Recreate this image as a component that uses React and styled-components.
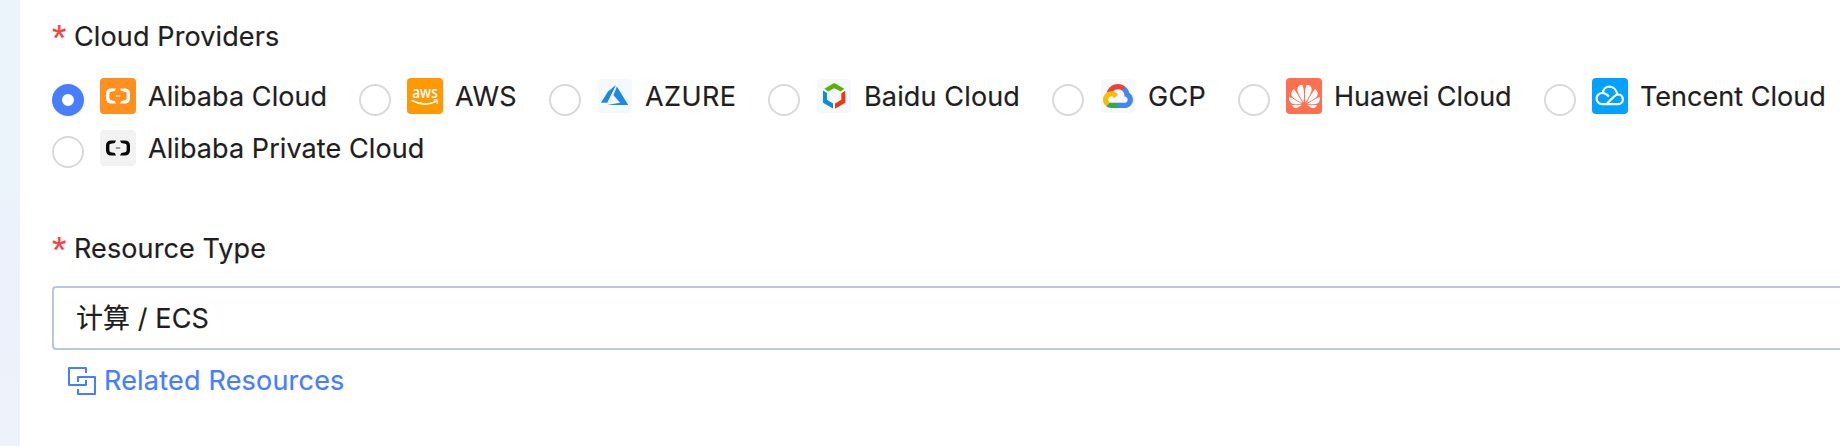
import React from "react";
import styled, { createGlobalStyle } from "styled-components";
import { SiHuawei } from "react-icons/si";

const GlobalStyle = createGlobalStyle`
  * { box-sizing: border-box; }
  body { margin: 0; background: #fff; overflow: hidden; }
`;

const Page = styled.div`
  display: flex;
  height: 446px;
  overflow: hidden;
  color: #1f1f1f;
  font-family: Inter, "Noto Sans CJK SC", sans-serif;
  font-size: 27px;
`;

const Rail = styled.div`
  flex: 0 0 20px;
  background: linear-gradient(#ebf3fb 0%, #ebf3fb 40%, #edf1fb 62%, #edf2fb 100%);
`;

const Form = styled.main`
  flex: 1 0 1860px;
  padding: 17px 0 0 32px;
`;

const Text = styled.span`
  white-space: nowrap;
  letter-spacing: ${(p) => p.$tracking ?? 0.08}px;
  -webkit-text-stroke: 0.2px currentColor;
`;

const FieldTitle = styled.div`
  display: flex;
  align-items: center;
  gap: 8px;
  height: 40px;
  line-height: 40px;
`;

const Required = styled.span`
  width: 14px;
  height: 40px;
  color: #f04545;
  font-family: "Liberation Sans", sans-serif;
  font-size: 37px;
  line-height: 44px;
  -webkit-text-stroke: 0.2px currentColor;
`;

const Options = styled.div`
  display: flex;
  flex-wrap: wrap;
  column-gap: 32px;
  width: 1788px;
  padding-top: 19px;
`;

const Option = styled.label`
  display: flex;
  align-items: flex-start;
  height: 52px;
`;

const Radio = styled.span`
  width: 32px;
  height: 32px;
  margin: 8px 16px 0 0;
  border-radius: 50%;
  background: #fff;
  border: ${(p) => (p.$checked ? "10px solid #477dff" : "2px solid #d9d9d9")};
`;

const Badge = styled.span`
  display: flex;
  width: 36px;
  height: 36px;
  margin: 2px 12px 0 0;
  border: ${(p) => (p.$inset ? "1px solid #fff" : "0")};
  border-radius: ${(p) => (p.$inset ? 5 : 4)}px;
  background: ${(p) => p.$bg};
  overflow: hidden;
  align-items: center;
  justify-content: center;

  svg { flex: none; }
`;

const OptionText = styled(Text)`
  width: ${(p) => p.$width}px;
  height: 42px;
  line-height: 42px;
`;

const ResourceField = styled.section`
  margin-top: 49px;
`;

const Select = styled.div`
  display: flex;
  align-items: center;
  height: 64px;
  margin-top: 17px;
  padding: 0 22px 3px;
  border: 2px solid #b8c6e3;
  border-radius: 4px;
`;

const RelatedLink = styled.a`
  display: inline-flex;
  align-items: center;
  gap: 8px;
  height: 40px;
  margin: 11px 0 0 16px;
  color: #477dff;
  line-height: 42px;
`;

const Alibaba = ({ color }) => (
  <svg width="36" height="36" viewBox="0 0 36 36" fill={color}>
    <path d="M16 10.4h-5a5 5 0 0 0-5 5v5.2a5 5 0 0 0 5 5h5l-1.2-2.5-3.9-.8c-.9-.2-1.5-.9-1.5-1.7v-5.2c0-.8.6-1.5 1.5-1.7l3.9-.8z" />
    <path d="M20 10.4h5a5 5 0 0 1 5 5v5.2a5 5 0 0 1-5 5h-5l1.2-2.5 3.9-.8c.9-.2 1.5-.9 1.5-1.7v-5.2c0-.8-.6-1.5-1.5-1.7l-3.9-.8z" />
    <path d="M15.8 17.3h4.4v1.4h-4.4z" opacity=".5" />
  </svg>
);

const Aws = () => (
  <svg width="36" height="36" viewBox="0 0 36 36">
    <text x="5.2" y="19.8" fill="#fff" fontFamily="Open Sans, sans-serif" fontSize="15.5" fontWeight="600" textLength="25.6" lengthAdjust="spacingAndGlyphs">aws</text>
    <path d="M5 22.6c7.8 4.3 16.6 4.5 24 1" fill="none" stroke="#fff" strokeWidth="1.7" strokeLinecap="round" />
    <path d="M26.8 22.2c3.5-.8 4.8-.4 3.3 3.6" fill="none" stroke="#fff" strokeWidth="1.2" />
  </svg>
);

const Azure = () => (
  <svg width="36" height="36" viewBox="0 0 36 36" fill="#1e88e5">
    <path transform="translate(4 4.1) scale(1.135 1.07)" d="M5.483 21.3H24L14.025 4.013l-3.038 8.347 5.836 6.938L5.483 21.3zM13.23 2.7L6.105 8.677 0 19.253h5.505v.014L13.23 2.7z" />
  </svg>
);

const Baidu = () => (
  <svg width="36" height="36" viewBox="0 0 36 36">
    <path fill="#5bb300" d="M18.2 5l10.2 5.7-3.7 2.7-6.5-3.2-6 3.2-3.9-2.7z" />
    <path fill="#0c8ddb" d="M7 12.6l4 2.5v6.7l6 3.6v5.1L7 24.7z" />
    <path fill="#f5330c" d="M29.3 12.8l-4 2.4v6.6l-6.3 3.8v5.1l10.3-6z" />
  </svg>
);

const Gcp = () => (
  <svg width="36" height="36" viewBox="0 0 36 36">
    <g transform="translate(3 6) scale(.117)">
      <path fill="#ea4335" d="M170.25 56.82l22.25-22.25 1.49-9.37C153.44-11.68 88.98-7.5 52.42 33.92 42.27 45.42 34.73 59.76 30.72 74.57l7.97-1.12 44.5-7.34 3.44-3.51c19.8-21.75 53.27-24.67 76.13-6.17z" />
      <path fill="#4285f4" d="M224.2 73.92c-5.11-18.84-15.61-35.77-30.21-48.72l-31.23 31.23c13.19 10.78 20.7 27.01 20.37 44.04v5.54c15.36 0 27.8 12.44 27.8 27.8s-12.44 27.48-27.8 27.48h-55.67l-5.46 5.93v33.34l5.46 5.24h55.67c39.93.3 72.56-31.5 72.87-71.43.19-24.2-11.75-46.89-31.8-60.45" />
      <path fill="#34a853" d="M71.87 205.8h55.59v-44.51H71.87c-3.96 0-7.8-.85-11.4-2.5l-7.89 2.42-22.4 22.25-1.96 7.58c12.57 9.49 27.9 14.82 43.65 14.76" />
      <path fill="#fbbc05" d="M71.87 61.43C31.94 61.66-.24 94.23 0 134.16c.13 22.3 10.55 43.29 28.22 56.88l32.25-32.25c-13.99-6.32-20.21-22.78-13.89-36.77 6.33-14 22.79-20.21 36.78-13.89 6.16 2.78 11.1 7.72 13.89 13.89l32.24-32.25C115.77 71.83 94.45 61.34 71.87 61.43" />
    </g>
  </svg>
);

const Tencent = () => (
  <svg width="36" height="36" viewBox="0 0 36 36" fill="none" stroke="#fff" strokeWidth="2.2">
    <path d="M15 25.6l6.8-6.9c1.5-1.5 2.7-2.3 4.2-2.3a4.9 4.9 0 0 1 0 9.8H10.2a5.6 5.6 0 0 1 0-11.2c2.8 0 4.6 1.2 6.7 3.4" />
    <path d="M10.9 15.2c.6-9 13-8.8 14.2 1.1" />
  </svg>
);

const RelatedIcon = () => (
  <svg width="28" height="28" viewBox="0 0 28 28" fill="none" stroke="currentColor" strokeWidth="2" strokeLinejoin="round">
    <path d="M18 6V1H1v17h17v-5" />
    <path d="M10 22v5h17V10H10v5" />
  </svg>
);

const providers = [
  { name: "Alibaba Cloud", width: 179, bg: "#ff9020", icon: <Alibaba color="#fff" />, checked: true },
  { name: "AWS", width: 62, bg: "#ff9900", icon: <Aws />, tracking: 0.3 },
  { name: "AZURE", width: 91, bg: "#f4f8ff", icon: <Azure />, inset: true, tracking: 0.4 },
  { name: "Baidu Cloud", width: 156, bg: "#f4f8ff", icon: <Baidu />, inset: true, tracking: 0.15 },
  { name: "GCP", width: 58, bg: "#f7f9ff", icon: <Gcp />, inset: true, tracking: 0.3 },
  { name: "Huawei Cloud", width: 178, bg: "#ff7050", icon: <SiHuawei size={31} color="#fff" />, tracking: 0 },
  { name: "Tencent Cloud", width: 184, bg: "#00a1ff", icon: <Tencent />, tracking: 0.02 },
  { name: "Alibaba Private Cloud", width: 276, bg: "#f2f2f2", icon: <Alibaba color="#080808" /> },
];

export default function App() {
  return (
    <Page>
      <GlobalStyle />
      <Rail />
      <Form>
        <FieldTitle>
          <Required>*</Required>
          <Text $tracking={0.12}>Cloud Providers</Text>
        </FieldTitle>
        <Options>
          {providers.map((p) => (
            <Option key={p.name}>
              <Radio $checked={p.checked} />
              <Badge $bg={p.bg} $inset={p.inset}>{p.icon}</Badge>
              <OptionText $width={p.width} $tracking={p.tracking}>{p.name}</OptionText>
            </Option>
          ))}
        </Options>
        <ResourceField>
          <FieldTitle>
            <Required>*</Required>
            <Text $tracking={0.1}>Resource Type</Text>
          </FieldTitle>
          <Select>
            <Text>计算 / ECS</Text>
          </Select>
          <RelatedLink>
            <RelatedIcon />
            <Text $tracking={0.2}>Related Resources</Text>
          </RelatedLink>
        </ResourceField>
      </Form>
    </Page>
  );
}
